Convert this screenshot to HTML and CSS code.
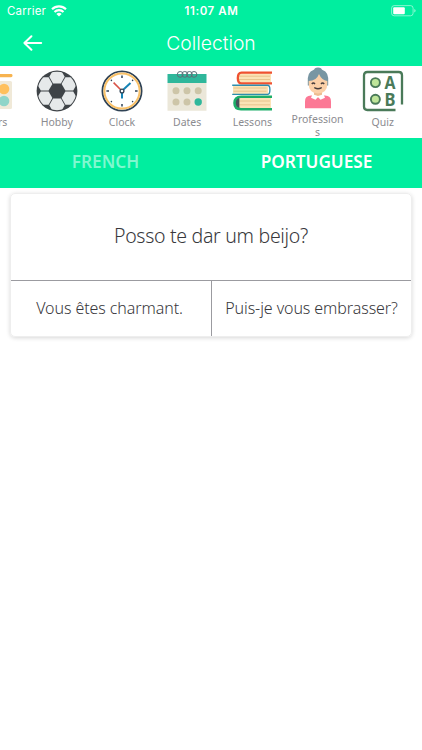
FILE: index.html
```html
<!DOCTYPE html>
<html lang="en">
<head>
    <meta charset="UTF-8">
    <meta name="viewport" content="width=device-width, initial-scale=1.0">
    <title>Collection</title>
    <link rel="stylesheet" href="styles.css">
</head>

<body>
    <header>
        <div class="status-bar">
            <div class="carrier">
                <span>Carrier</span>
                <svg width="16" height="12" viewBox="0 0 16 12" fill="none" stroke="#fff" stroke-width="2.1">
                    <path d="M1 4.2a10 10 0 0 1 14 0M3.5 7a6.4 6.4 0 0 1 9 0"/>
                    <path d="M5.4 9a3.7 3.7 0 0 1 5.2 0L8 11.6z" fill="#fff" stroke="none"/>
                </svg>
            </div>
            <span class="time">11:07 AM</span>
            <svg class="battery" width="25" height="12" viewBox="0 0 25 12">
                <rect x=".6" y=".6" width="21.5" height="10.2" rx="2.6" fill="none" stroke="#fff" stroke-opacity=".5"/>
                <rect x="2.2" y="2.2" width="11.6" height="7" rx="1" fill="#fff"/>
                <path d="M23.3 4v3.6q1.3-.6 1.3-1.8T23.3 4" fill="#fff" fill-opacity=".6"/>
            </svg>
        </div>
        <div class="title-bar">
            <a href="#" class="back">
                <svg width="20" height="16" viewBox="0 0 20 16" fill="none" stroke="#fff" stroke-width="2" stroke-linecap="round" stroke-linejoin="round">
                    <path d="M18.2 8H1.4M8.4 1.2 1.4 8l7 6.8"/>
                </svg>
            </a>
            <h1>Collection</h1>
        </div>
    </header>

    <nav class="categories">
        <a href="#" class="category">
            <svg class="icon" viewBox="0 0 42 42">
                <rect x="8" y="4" width="33.5" height="3.2" rx="1.4" fill="#f7b34f"/>
                <rect x="8" y="11" width="33" height="28" rx="1.5" fill="#f0e9d8"/>
                <circle cx="33" cy="19" r="5.3" fill="#ffc05c"/>
                <circle cx="33" cy="31" r="5.3" fill="#90d5c9"/>
            </svg>
            <span>Colors</span>
        </a>
        <a href="#" class="category">
            <svg class="icon" viewBox="0 0 42 42">
                <defs>
                    <clipPath id="ball"><circle cx="21" cy="21" r="19.3"/></clipPath>
                    <path id="hex" d="M-7.7 0-3.9-6.7H3.9L7.7 0 3.9 6.7H-3.9z" fill="#e6e9ea"/>
                </defs>
                <circle cx="21" cy="21" r="20.4" fill="#3e4347"/>
                <g clip-path="url(#ball)">
                    <use href="#hex" x="21" y="6.8"/>
                    <use href="#hex" x="8.7" y="13.9"/>
                    <use href="#hex" x="33.3" y="13.9"/>
                    <use href="#hex" x="8.7" y="28.1"/>
                    <use href="#hex" x="33.3" y="28.1"/>
                    <use href="#hex" x="21" y="35.2"/>
                </g>
            </svg>
            <span>Hobby</span>
        </a>
        <a href="#" class="category">
            <svg class="icon" viewBox="0 0 42 42">
                <circle cx="21" cy="21" r="19.6" fill="#fff" stroke="#2f4255" stroke-width="1.8"/>
                <circle cx="21" cy="21" r="17.6" fill="none" stroke="#f9c168" stroke-width="2"/>
                <path d="M21 5.4v2.6M21 34v2.6M5.4 21H8M34 21h2.6" stroke="#2f4255" stroke-width="1.5"/>
                <g fill="#2f4255">
                    <circle cx="10.4" cy="10.4" r=".8"/>
                    <circle cx="31.6" cy="10.4" r=".8"/>
                    <circle cx="10.4" cy="31.6" r=".8"/>
                    <circle cx="31.6" cy="31.6" r=".8"/>
                </g>
                <path d="m19.5 19.5-6.9-6.9" stroke="#d95347" stroke-width="1.6"/>
                <path d="m22.5 19.5 7-6.6M21 23v5.5" stroke="#1784b5" stroke-width="2"/>
                <circle cx="21" cy="21" r="1.9" fill="#fff" stroke="#2f4255" stroke-width="1.3"/>
            </svg>
            <span>Clock</span>
        </a>
        <a href="#" class="category">
            <svg class="icon" viewBox="0 0 42 42">
                <path d="M1.5 13h39v27.8h-39z" fill="#ebe7d9"/>
                <path d="M1.5 4h39v9h-39z" fill="#2fb79b"/>
                <g fill="none" stroke="#5d6f78" stroke-width="1">
                    <circle cx="14.2" cy="4.4" r="2.9"/>
                    <circle cx="18.8" cy="4.4" r="2.9"/>
                    <circle cx="23.4" cy="4.4" r="2.9"/>
                    <circle cx="28" cy="4.4" r="2.9"/>
                </g>
                <g fill="#cdc5a8">
                    <circle cx="10" cy="20.8" r="3.5"/>
                    <circle cx="21" cy="20.8" r="3.5"/>
                    <circle cx="32.2" cy="20.8" r="3.5"/>
                    <circle cx="10" cy="32" r="3.5"/>
                    <circle cx="21" cy="32" r="3.5"/>
                </g>
                <circle cx="32.2" cy="32" r="3.7" fill="#2fb79b"/>
            </svg>
            <span>Dates</span>
        </a>
        <a href="#" class="category">
            <svg class="icon" viewBox="0 0 42 42">
                <path d="M8 3.2h32v9.4H8z" fill="#fbe3b6"/>
                <path d="M8 6.2h31M8 9.5h31" stroke="#e3bd83" stroke-width=".8"/>
                <path d="M41 2.6H10.5Q6.8 2.6 6.8 8t3.7 5.4H41" fill="none" stroke="#ef5230" stroke-width="2.3"/>
                <path d="M2 15h35v9.4H2z" fill="#fbe3b6"/>
                <path d="M2.5 18h33M2.5 21.2h33" stroke="#e3bd83" stroke-width=".8"/>
                <path d="M1.2 15.2h35.4q2.3 0 2.3 4.6t-2.3 4.6H1.2" fill="none" stroke="#2e8eae" stroke-width="1.4"/>
                <path d="M8 27.5h32v11H8z" fill="#fbe3b6"/>
                <path d="M8 31h31M8 34.8h31" stroke="#e3bd83" stroke-width=".8"/>
                <path d="M8.4 27q-4.5 1.5-4.5 6t4.5 6z" fill="#46515b"/>
                <path d="M41 26.8H10q-6.5 0-6.5 6.2T10 39.2h31" fill="none" stroke="#1dae69" stroke-width="2.6"/>
            </svg>
            <span>Lessons</span>
        </a>
        <a href="#" class="category tall">
            <svg class="icon" viewBox="0 0 42 42">
                <path d="M8 41.3v-7q0-5.5 6-5.8h14q6 .3 6 5.8v7z" fill="#fc7895"/>
                <path d="M17 22h8v6l-4 3-4-3z" fill="#eebd91"/>
                <path d="M15.5 27.2 21 29l5.5-1.8 1.5 3.5-4.5 2-2.5-2.8-2.5 2.8-4.5-2z" fill="#fff"/>
                <path d="M17 3.6Q17 .6 21 .6t4 3z" fill="#7896a3"/>
                <path d="M10.8 18.5V11Q11.5 2.2 21 2.2T31.2 11v7.5z" fill="#7896a3"/>
                <path d="M11.7 14Q19.5 14 22 7q2.5 6 8.3 7v3q0 9-9.3 9.5-9.3-.5-9.3-9.5z" fill="#fbd0a8"/>
                <path d="M14.8 17q1.5-1.8 3.2 0M24 17q1.5-1.8 3.2 0" fill="none" stroke="#463c3c" stroke-width="1.5"/>
                <path d="M17.8 20.8q3.2 1.8 6.4 0" fill="none" stroke="#463c3c" stroke-width="1.4" stroke-linecap="round"/>
            </svg>
            <span>Professions</span>
        </a>
        <a href="#" class="category">
            <svg class="icon" viewBox="0 0 42 42">
                <path d="M33.5 40H5.3Q2 40 2 36.7V5.3Q2 2 5.3 2h31.4Q40 2 40 5.3v29.2" fill="none" stroke="#4a7a59" stroke-width="2.3"/>
                <g fill="#bfe59a" stroke="#4a7a59" stroke-width="1.9">
                    <circle cx="13.4" cy="12.6" r="4.5"/>
                    <circle cx="13.4" cy="29.3" r="4.5"/>
                </g>
                <g class="quiz-letters">
                    <text x="28" y="19" textLength="11" lengthAdjust="spacingAndGlyphs">A</text>
                    <text x="28" y="35.8" textLength="11" lengthAdjust="spacingAndGlyphs">B</text>
                </g>
            </svg>
            <span>Quiz</span>
        </a>
    </nav>

    <div class="tabs">
        <button class="tab">FRENCH</button>
        <button class="tab active">PORTUGUESE</button>
    </div>

    <main>
        <section class="card">
            <p class="question">Posso te dar um beijo?</p>
            <div class="answers">
                <button class="answer">Vous êtes charmant.</button>
                <button class="answer">Puis-je vous embrasser?</button>
            </div>
        </section>
    </main>
</body>
</html>
```

FILE: styles.css
```css
*{
    margin: 0;
    padding: 0;
    box-sizing: border-box;
}
body{
    font-family: "Noto Sans", sans-serif;
    background-color: #fff;
    overflow: hidden;
}
a{
    text-decoration: none;
}
svg{
    display: block;
    flex-shrink: 0;
}
button{
    border: none;
    background: none;
    font-family: inherit;
    cursor: pointer;
}
header{
    height: 66px;
    background-color: #00ee9f;
    color: #fff;
    font-family: Inter, sans-serif;
}
.status-bar{
    display: grid;
    grid-template-columns: 1fr auto 1fr;
    align-items: center;
    height: 22px;
    padding: 0 6px 0 7px;
    font-size: 11.5px;
}
.carrier{
    display: flex;
    align-items: center;
    gap: 5px;
    letter-spacing: 0.2px;
}
.time{
    font-size: 11.5px;
    font-weight: 600;
    letter-spacing: 0.6px;
}
.battery{
    justify-self: end;
}
.title-bar{
    display: grid;
    grid-template-columns: 1fr auto 1fr;
    align-items: center;
    height: 42px;
    padding: 0 23px;
}
.title-bar h1{
    font-size: 19.3px;
    font-weight: 300;
    padding-bottom: 1px;
}
.categories{
    display: flex;
    height: 72px;
    margin-left: -41px;
    overflow: hidden;
}
.category{
    display: flex;
    flex-direction: column;
    flex: 0 0 65.2px;
    align-items: center;
    gap: 4px;
    padding-top: 4px;
    color: #8b8b90;
}
.category.tall{
    padding-top: 1px;
}
.category span{
    width: 54px;
    font-size: 10.5px;
    line-height: 13px;
    text-align: center;
    word-break: break-all;
}
.icon{
    width: 42px;
    height: 42px;
}
.quiz-letters{
    font-family: "Noto Sans", sans-serif;
    font-size: 18px;
    font-weight: 700;
    fill: #4a7a59;
    text-anchor: middle;
}
.tabs{
    display: grid;
    grid-template-columns: 1fr 1fr;
    height: 50px;
    background-color: #00ee9f;
}
.tab{
    color: #7ff7cf;
    font-size: 17.2px;
    font-weight: 600;
    padding-bottom: 3px;
}
.tab.active{
    color: #fff;
}
main{
    padding: 5px 10px;
}
.card{
    height: 144px;
    border: 1px solid #eee;
    border-radius: 5px;
    box-shadow: 0 1px 4px rgba(0,0,0,0.16);
    color: #38383c;
    overflow: hidden;
}
.question{
    display: flex;
    align-items: center;
    justify-content: center;
    height: 87px;
    padding-bottom: 4px;
    border-bottom: 1px solid #9b9ba0;
    font-size: 19.5px;
    letter-spacing: -0.3px;
    font-weight: 300;
}
.answers{
    display: grid;
    grid-template-columns: 201px 1fr;
    height: 56px;
}
.answer{
    color: #38383c;
    font-size: 16px;
    font-weight: 300;
    letter-spacing: -0.08px;
    white-space: nowrap;
    padding-bottom: 3px;
}
.answer:first-child{
    padding-right: 3px;
    border-right: 1px solid #9b9ba0;
}
```
